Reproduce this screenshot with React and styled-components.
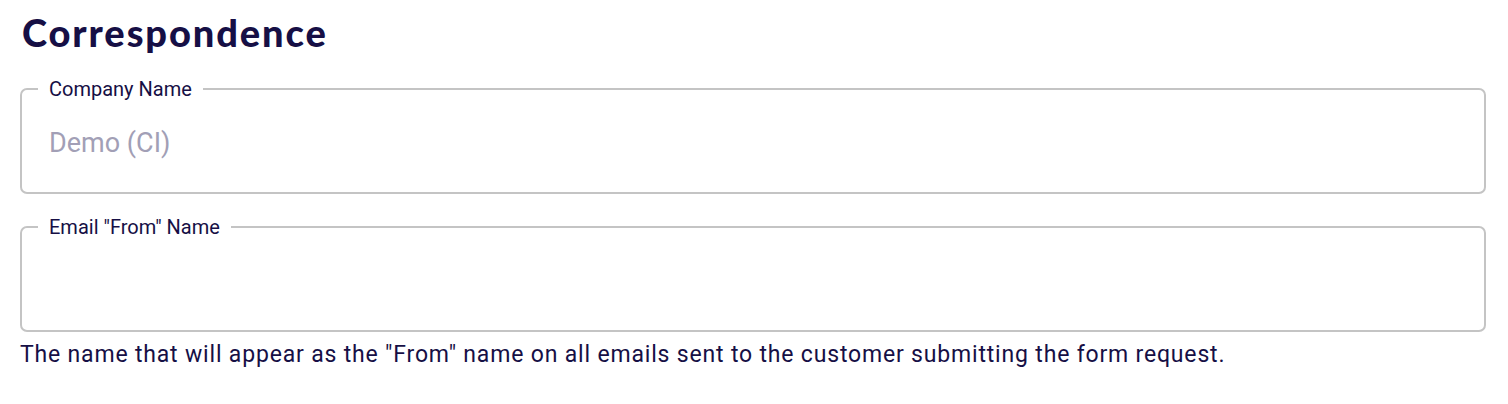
import React from "react";
import styled, { createGlobalStyle } from "styled-components";

const GlobalStyle = createGlobalStyle`
  html, body {
    margin: 0;
    padding: 0;
    background: #ffffff;
  }
  body {
    font-family: Roboto, "Liberation Sans", sans-serif;
    color: #160f45;
  }
`;

const Page = styled.div`
  padding: 8px 22px 0 20px;
  box-sizing: border-box;
  width: 100%;
`;

const Heading = styled.h2`
  margin: 0 0 0 2px;
  font-family: Lato, "DejaVu Sans", sans-serif;
  font-weight: 900;
  font-size: 38px;
  line-height: 49px;
  letter-spacing: 1.9px;
  color: #160f45;
`;

const Fields = styled.div`
  margin-top: 21px;
  display: flex;
  flex-direction: column;
  gap: 22px;
`;

const Field = styled.fieldset`
  margin: 0;
  padding: 0 16px;
  min-width: 0;
  border: 2px solid #c4c4c4;
  border-radius: 7px;
  height: 116px;
  box-sizing: border-box;
`;

const Legend = styled.legend`
  padding: 0 11px;
  font-size: 20px;
  line-height: 22px;
  color: #160f45;
`;

const Input = styled.input`
  display: block;
  width: 100%;
  box-sizing: border-box;
  border: none;
  outline: none;
  background: transparent;
  padding: 27px 11px 0;
  font-family: Roboto, "Liberation Sans", sans-serif;
  font-size: 27px;
  color: #160f45;

  &::placeholder {
    color: #a29fb6;
    opacity: 1;
  }
`;

const Helper = styled.p`
  margin: 8px 0 0;
  font-size: 23px;
  line-height: 30px;
  letter-spacing: 0.82px;
  color: #160f45;
`;

function TextField({ label, placeholder }) {
  return (
    <Field>
      <Legend>{label}</Legend>
      <Input placeholder={placeholder} />
    </Field>
  );
}

export default function App() {
  return (
    <>
      <GlobalStyle />
      <Page>
        <Heading>Correspondence</Heading>
        <Fields>
          <TextField label="Company Name" placeholder="Demo (CI)" />
          <div>
            <TextField label={'Email "From" Name'} />
            <Helper>
              The name that will appear as the "From" name on all emails sent to
              the customer submitting the form request.
            </Helper>
          </div>
        </Fields>
      </Page>
    </>
  );
}
